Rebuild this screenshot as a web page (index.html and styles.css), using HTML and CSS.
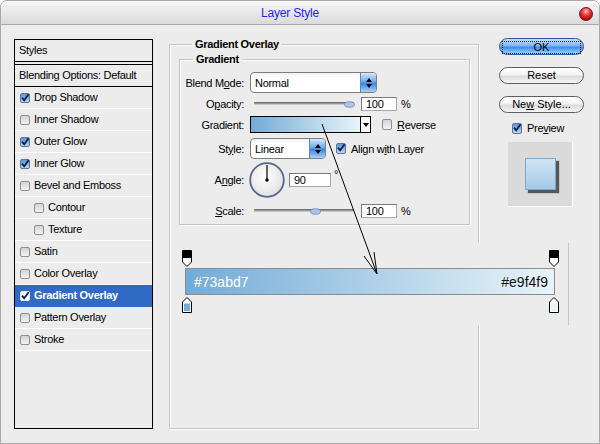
FILE: index.html
```html
<!DOCTYPE html>
<html lang="en">
<head>
    <meta charset="UTF-8">
    <title>Layer Style</title>
    <link rel="stylesheet" href="styles.css">
</head>
<body>

<div class="window">
    <div class="titlebar">
        <span class="title">Layer Style</span>
        <span class="close"></span>
    </div>

    <div class="content">
        <!-- styles list -->
        <div class="styles">
            <div class="styles-head">Styles</div>
            <div class="styles-blend">Blending Options: Default</div>
            <div class="item"><span class="cb on"><svg viewBox="0 0 8 8"><path d="M1 3.6 L3.2 6.3 L7.6 0.2"/></svg></span>Drop Shadow</div>
            <div class="item"><span class="cb"></span>Inner Shadow</div>
            <div class="item"><span class="cb on"><svg viewBox="0 0 8 8"><path d="M1 3.6 L3.2 6.3 L7.6 0.2"/></svg></span>Outer Glow</div>
            <div class="item"><span class="cb on"><svg viewBox="0 0 8 8"><path d="M1 3.6 L3.2 6.3 L7.6 0.2"/></svg></span>Inner Glow</div>
            <div class="item"><span class="cb"></span>Bevel and Emboss</div>
            <div class="item sub"><span class="cb"></span>Contour</div>
            <div class="item sub"><span class="cb"></span>Texture</div>
            <div class="item"><span class="cb"></span>Satin</div>
            <div class="item"><span class="cb"></span>Color Overlay</div>
            <div class="item selected"><span class="cb on"><svg viewBox="0 0 8 8"><path d="M1 3.6 L3.2 6.3 L7.6 0.2"/></svg></span>Gradient Overlay</div>
            <div class="item"><span class="cb"></span>Pattern Overlay</div>
            <div class="item"><span class="cb"></span>Stroke</div>
        </div>

        <!-- gradient overlay settings -->
        <fieldset class="group outer">
            <legend>Gradient Overlay</legend>
            <fieldset class="group inner">
                <legend>Gradient</legend>
                <div class="form">
                    <div class="lbl">Blend M<u>o</u>de:</div>
                    <div class="ctl">
                        <div class="select wide"><span class="val">Normal</span><span class="spin"><i class="up"></i><i class="down"></i></span></div>
                    </div>

                    <div class="lbl">O<u>p</u>acity:</div>
                    <div class="ctl gap4">
                        <div class="slider"><span class="track"></span><svg class="thumb" style="left: 94px" viewBox="0 0 11 7"><ellipse cx="5.5" cy="3.5" rx="5" ry="2.8"/></svg></div>
                        <span class="num">100</span>
                        <span>%</span>
                    </div>

                    <div class="lbl">Gradient:</div>
                    <div class="ctl">
                        <div class="swatch"><span class="swatch-fill"></span><span class="swatch-drop"><i class="down"></i></span></div>
                        <span class="cb big reverse"></span>
                        <span class="cb-text"><u>R</u>everse</span>
                    </div>

                    <div class="lbl">St<u>y</u>le:</div>
                    <div class="ctl">
                        <div class="select narrow"><span class="val">Linear</span><span class="spin"><i class="up"></i><i class="down"></i></span></div>
                        <span class="cb big on align"><svg viewBox="0 0 8 8"><path d="M1 3.6 L3.2 6.3 L7.6 0.2"/></svg></span>
                        <span class="cb-text">Align w<u>i</u>th Layer</span>
                    </div>

                    <div class="lbl">A<u>n</u>gle:</div>
                    <div class="ctl gap4">
                        <svg class="dial" viewBox="0 0 36 36">
                            <defs>
                                <radialGradient id="dialfill" cx="45%" cy="40%" r="60%">
                                    <stop offset="0" stop-color="#ffffff"/>
                                    <stop offset="1" stop-color="#e2e2e2"/>
                                </radialGradient>
                            </defs>
                            <circle cx="18" cy="18" r="16.8" fill="url(#dialfill)" stroke="#55688b" stroke-width="1.8"/>
                            <line x1="18" y1="18" x2="18" y2="3" stroke="#000" stroke-width="1.2"/>
                            <circle cx="18" cy="18" r="1.7" fill="#000"/>
                        </svg>
                        <span class="num angle">90</span>
                        <span class="deg">°</span>
                    </div>

                    <div class="lbl"><u>S</u>cale:</div>
                    <div class="ctl gap4">
                        <div class="slider"><span class="track"></span><svg class="thumb" style="left: 60px" viewBox="0 0 11 7"><ellipse cx="5.5" cy="3.5" rx="5" ry="2.8"/></svg></div>
                        <span class="num">100</span>
                        <span>%</span>
                    </div>
                </div>
            </fieldset>
        </fieldset>

        <!-- buttons and preview -->
        <div class="actions">
            <div class="btn default"><span>OK</span></div>
            <div class="btn reset">Reset</div>
            <div class="btn new">Ne<u>w</u> Style...</div>
            <div class="preview-check">
                <span class="cb big on"><svg viewBox="0 0 8 8"><path d="M1 3.6 L3.2 6.3 L7.6 0.2"/></svg></span>
                <span>Pre<u>v</u>iew</span>
            </div>
            <div class="preview"><span class="preview-square"></span></div>
        </div>
    </div>

    <!-- gradient editor strip pasted over the dialog -->
    <div class="editor">
        <div class="stops">
            <svg class="stop" viewBox="0 0 10 17"><path d="M0.5 0.5 H9.5 V12 L5 16.5 L0.5 12 Z" fill="#fff" stroke="#000"/><rect x="1" y="1" width="8" height="7" fill="#000"/></svg>
            <svg class="stop" viewBox="0 0 10 17"><path d="M0.5 0.5 H9.5 V12 L5 16.5 L0.5 12 Z" fill="#fff" stroke="#000"/><rect x="1" y="1" width="8" height="7" fill="#000"/></svg>
        </div>
        <div class="bar">
            <span class="hex-left">#73abd7</span>
            <span class="hex-right">#e9f4f9</span>
        </div>
        <div class="stops bottom">
            <svg class="stop" viewBox="0 0 10 16"><path d="M5 0.5 L9.5 5 V15.5 H0.5 V5 Z" fill="#fff" stroke="#000"/><rect x="2" y="6.5" width="6" height="7.5" fill="#73abd7"/></svg>
            <svg class="stop" viewBox="0 0 10 16"><path d="M5 0.5 L9.5 5 V15.5 H0.5 V5 Z" fill="#fff" stroke="#000"/><rect x="2" y="6.5" width="6" height="7.5" fill="#e9f4f9"/></svg>
        </div>
    </div>

    <svg class="arrow" viewBox="0 0 600 444">
        <path d="M322 124 L377 274 M364 256 L377 274 L374 252" fill="none" stroke="#000" stroke-width="1"/>
    </svg>
</div>

</body>
</html>
```

FILE: styles.css
```css
body {
    margin: 0;
    background: #ffffff;
    font-family: "Liberation Sans", Arial, sans-serif;
    font-size: 11px;
    color: #000;
    letter-spacing: -0.3px;
}
u {
    text-decoration: underline;
}
.window {
    position: relative;
    width: 600px;
    height: 444px;
    box-sizing: border-box;
    border: 1px solid #a9a9a9;
    border-radius: 7px 7px 0 0;
    background: #ececec;
    overflow: hidden;
}
.titlebar {
    display: flex;
    align-items: center;
    height: 23px;
    border-bottom: 1px solid #a8a8a8;
    background: linear-gradient(#f7f7f7, #dadada);
}
.title {
    flex: 1;
    text-align: center;
    color: #1f1ff2;
    font-size: 12px;
    letter-spacing: -0.2px;
    padding-top: 1px;
}
.close {
    width: 14px;
    height: 14px;
    box-sizing: border-box;
    margin: 2px 6px 0 0;
    border-radius: 50%;
    border: 1px solid #7a1414;
    background: radial-gradient(circle at 50% 28%, #ffc4c4 0, #f04040 35%, #b00a0a 75%, #8a0000 100%);
}
.content {
    display: flex;
    align-items: flex-start;
    padding: 12px 0 0 13px;
}

/* styles list */
.styles {
    width: 139px;
    height: 390px;
    box-sizing: border-box;
    margin-top: 2px;
    border: 1px solid #000;
}
.styles-head {
    height: 20px;
    line-height: 20px;
    padding: 0 0 1px 4px;
    border-bottom: 1px solid #000;
}
.styles-blend {
    height: 20px;
    line-height: 20px;
    padding: 0 0 1px 4px;
    margin-top: 2px;
    border-top: 1px solid #000;
    border-bottom: 1px solid #000;
}
.item {
    display: flex;
    align-items: center;
    gap: 4px;
    height: 19px;
    padding: 0 0 2px 5px;
    border-bottom: 1px solid #fff;
}
.item .cb {
    margin-top: 2px;
}
.item.sub {
    padding-left: 19px;
}
.item.selected {
    background: #316ac5;
    border-bottom-color: #316ac5;
    color: #fff;
    font-weight: bold;
}
.cb {
    display: inline-block;
    flex: none;
    width: 10px;
    height: 10px;
    box-sizing: border-box;
    border: 1px solid #8e8e8e;
    border-radius: 2px;
    background: linear-gradient(#d2d2d2, #f4f4f4);
}
.cb.on {
    border-color: #62748e;
    background: linear-gradient(#5e93d4, #b9d5f2);
}
.item.selected .cb {
    border-color: #dfe7f3;
    background: #ffffff;
}
.cb svg {
    display: block;
    width: 8px;
    height: 8px;
    overflow: visible;
}
.cb svg path {
    fill: none;
    stroke: #10215a;
    stroke-width: 1.9;
}
.cb.big {
    width: 10px;
    height: 11px;
}

/* group boxes */
.group {
    margin: 0;
    padding: 0;
    min-width: 0;
    border: 1px solid #c4c4c4;
    box-shadow: 1px 1px 0 #fff, inset 1px 1px 0 #fff;
}
.group > legend {
    margin-left: 13px;
    padding: 0 3px;
    font-weight: bold;
    line-height: 14px;
}
.outer {
    width: 310px;
    height: 392px;
    box-sizing: border-box;
    margin-left: 16px;
    padding: 1px 9px 0 9px;
}
.inner {
    width: 291px;
    box-sizing: border-box;
}
.form {
    display: grid;
    grid-template-columns: 64px 1fr;
    grid-template-rows: 21px 21px 21px 27px 35px 27px;
    column-gap: 6px;
    align-items: center;
    padding-top: 6px;
}
.lbl {
    text-align: right;
}
.ctl {
    display: flex;
    align-items: center;
}
.gap4 {
    gap: 4px;
}
.select {
    display: flex;
    height: 21px;
    box-sizing: border-box;
    border: 1px solid #7d7d7d;
    border-radius: 4px;
    background: linear-gradient(#f2f2f2, #ffffff 30%);
    overflow: hidden;
}
.select.wide {
    width: 127px;
}
.select.narrow {
    width: 76px;
}
.val {
    flex: 1;
    padding-left: 4px;
    line-height: 20px;
}
.spin {
    width: 15px;
    display: flex;
    flex-direction: column;
    align-items: center;
    justify-content: center;
    gap: 2px;
    border-left: 1px solid #5a86c4;
    background: linear-gradient(#d6e8fc, #6fa9ee 45%, #3a86e2 55%, #a9d2fb);
}
.up {
    width: 0;
    height: 0;
    border-left: 3px solid transparent;
    border-right: 3px solid transparent;
    border-bottom: 4px solid #000;
}
.down {
    width: 0;
    height: 0;
    border-left: 3px solid transparent;
    border-right: 3px solid transparent;
    border-top: 4px solid #000;
}
.slider {
    position: relative;
    width: 103px;
    height: 14px;
    padding-left: 4px;
    display: flex;
    align-items: center;
}
.track {
    width: 100px;
    height: 3px;
    background: linear-gradient(#5a5a5a, #9a9a9a 50%, #e0e0e0);
    border-radius: 1px;
}
.thumb {
    position: absolute;
    top: 4px;
    width: 11px;
    height: 7px;
}
.thumb ellipse {
    fill: #a7c6ea;
    stroke: #6c86ad;
    stroke-width: 0.8;
}
.num {
    width: 36px;
    height: 14px;
    box-sizing: border-box;
    padding-left: 4px;
    line-height: 12px;
    border: 1px solid #7a7a7a;
    border-right-color: #a8a8a8;
    border-bottom-color: #a8a8a8;
    background: #fff;
}
.num.angle {
    width: 42px;
}
.deg {
    align-self: flex-start;
    margin-top: 6px;
    margin-left: -1px;
}
.swatch {
    display: flex;
    width: 121px;
    height: 17px;
    box-sizing: border-box;
    border: 1px solid #000;
}
.swatch-fill {
    flex: 1;
    background: linear-gradient(to right, #73abd7, #e9f4f9);
}
.swatch-drop {
    width: 9px;
    display: flex;
    align-items: center;
    justify-content: center;
    border-left: 1px solid #000;
    background: #fff;
}
.reverse {
    margin-left: 11px;
}
.align {
    margin-left: 10px;
}
.cb-text {
    margin-left: 5px;
}
.dial {
    width: 36px;
    height: 36px;
    margin-left: -1px;
}

/* right column */
.actions {
    display: flex;
    flex-direction: column;
    width: 85px;
    margin-left: 20px;
}
.btn {
    height: 17px;
    box-sizing: border-box;
    border-radius: 9px;
    text-align: center;
    line-height: 15px;
    letter-spacing: 0;
    border: 1px solid #5e5e5e;
    background: linear-gradient(#ffffff, #f3f3f3 45%, #dcdcdc 55%, #f6f6f6);
}
.btn.default {
    margin-top: 1px;
    padding: 2px;
    border-color: #2b5a9c;
    background: linear-gradient(#c4e1ff, #7ab6f3 45%, #3f8ee6 55%, #a4d3ff);
}
.btn.default span {
    display: block;
    height: 11px;
    line-height: 10px;
    border: 1px dotted #000;
}
.btn.reset {
    margin-top: 12px;
}
.btn.new {
    margin-top: 12px;
}
.preview-check {
    display: flex;
    align-items: center;
    gap: 5px;
    margin-top: 9px;
    padding-left: 13px;
}
.preview {
    width: 65px;
    height: 65px;
    box-sizing: border-box;
    margin: 8px 0 0 9px;
    display: flex;
    align-items: center;
    justify-content: center;
    background: #dadada;
    border-right: 1px solid #fff;
    border-bottom: 1px solid #fff;
}
.preview-square {
    width: 31px;
    height: 32px;
    box-sizing: border-box;
    border: 1px solid #7ea6c6;
    background: linear-gradient(#cfe5f4, #a3cae8);
    box-shadow: 3px 3px 1px rgba(0, 0, 0, 0.6);
}

/* gradient editor */
.editor {
    position: absolute;
    left: 170px;
    top: 242px;
    width: 397px;
    height: 75px;
    padding-top: 7px;
    display: flex;
    flex-direction: column;
    background: #ececec;
    border-right: 1px solid #c4c4c4;
}
.stops {
    display: flex;
    justify-content: space-between;
    height: 17px;
    padding: 0 9px 0 11px;
}
.stops.bottom {
    height: 16px;
    margin-top: 2px;
}
.stop {
    width: 10px;
    height: 100%;
}
.bar {
    display: flex;
    justify-content: space-between;
    align-items: center;
    height: 27px;
    box-sizing: border-box;
    margin: 1px 13px 0 14px;
    padding: 0 6px 0 8px;
    border: 1px solid #8c8c8c;
    background: linear-gradient(to right, #73abd7, #e9f4f9);
    font-size: 14px;
    letter-spacing: 0;
}
.hex-left {
    color: #fff;
}
.hex-right {
    color: #111;
}
.arrow {
    position: absolute;
    left: -1px;
    top: -1px;
    width: 600px;
    height: 444px;
    pointer-events: none;
}
```
